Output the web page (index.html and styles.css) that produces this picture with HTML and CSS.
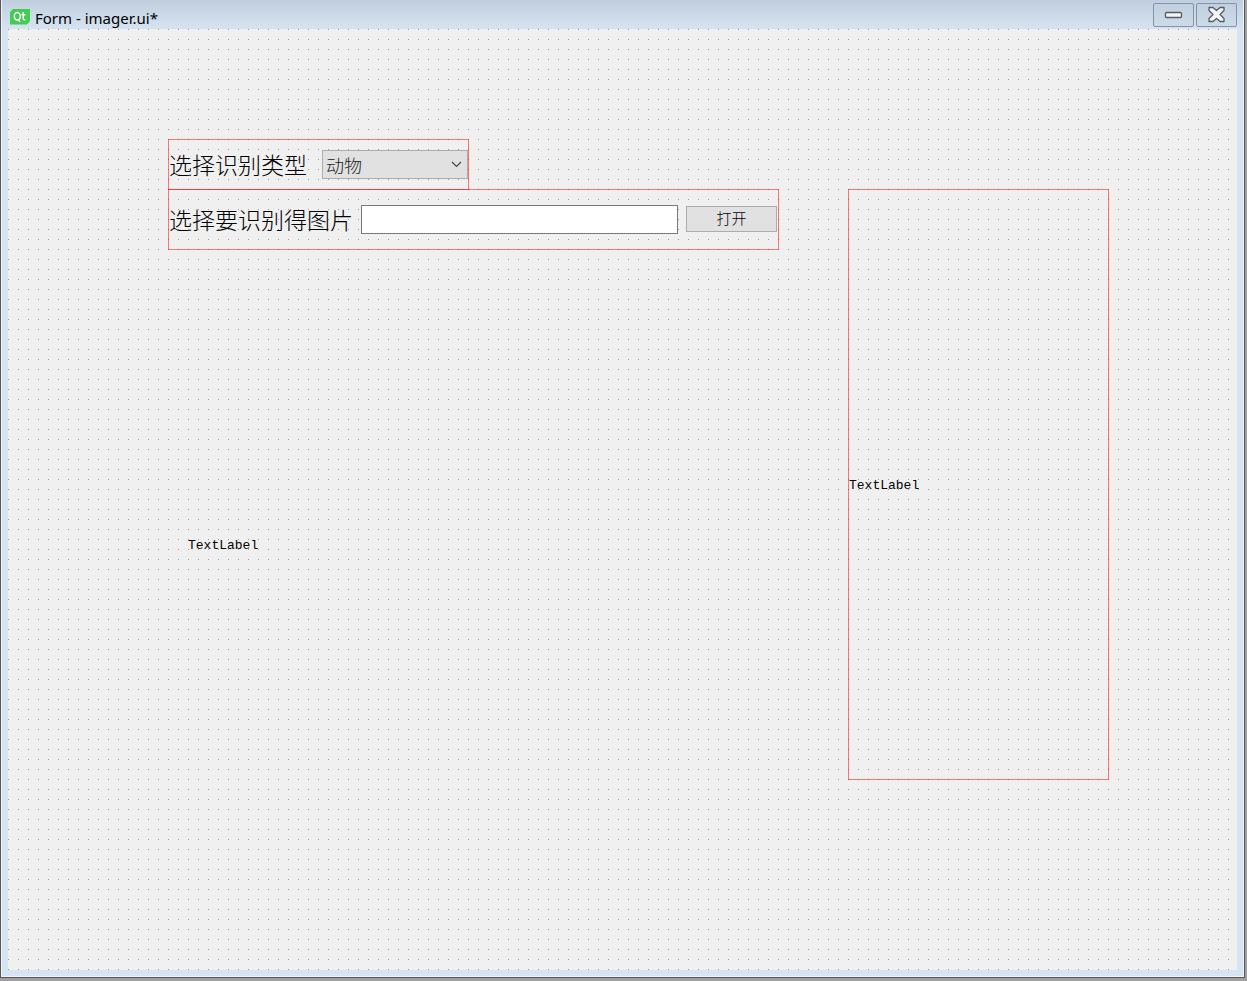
FILE: index.html
```html
<!DOCTYPE html>
<html lang="zh-CN">
<head>
<meta charset="utf-8">
<title>Form - imager.ui*</title>
<link rel="stylesheet" href="styles.css">
</head>
<body>
<div class="window">
  <header class="titlebar">
    <svg class="logo" width="20" height="16" viewBox="0 0 20 16" aria-hidden="true">
      <path d="M3 0H20V12L17 15.5H0V3Z" fill="#41cd52"/>
      <g fill="none" stroke="#fff" stroke-width="1.5">
        <ellipse cx="7.3" cy="7.3" rx="3" ry="3.7"/>
        <path d="M8 10.5l2 2.2M13.2 3v6.4q0 1.700 2.200 1.300M11.500 5.800h3.900"/>
      </g>
    </svg>
    <h1 class="title">Form - imager.ui*</h1>
    <button class="winbtn" type="button" aria-label="Minimize">
      <svg width="19" height="8" viewBox="0 0 19 8"><rect x="1.500" y="1.500" width="16" height="5" rx="1" fill="#f4f4f4" stroke="#535b69" stroke-width="1.300"/></svg>
    </button>
    <button class="winbtn" type="button" aria-label="Close">
      <svg width="19" height="17" viewBox="0 0 19 17"><path d="M2 1.500H6L9.500 4.500L13 1.500H17V4.500L13 8.500L17 12.500V15.500H13L9.500 12.500L6 15.500H2V12.500L6 8.500L2 4.500Z" fill="#f4f4f4" stroke="#535b69" stroke-width="1.300" stroke-linejoin="round"/></svg>
    </button>
  </header>
  <main class="canvas">
    <div class="left">
      <div class="layout type-row">
        <label class="caption" for="kind">选择识别类型</label>
        <div class="combo">
          <select id="kind"><option>动物</option></select>
          <svg class="chevron" width="11" height="7" viewBox="0 0 11 7" aria-hidden="true"><path d="M1 1L5.500 5.500L10 1" fill="none" stroke="#444" stroke-width="1.200"/></svg>
        </div>
      </div>
      <div class="layout file-row">
        <label class="caption" for="path">选择要识别得图片</label>
        <input class="path" id="path" type="text">
        <button class="open" type="button">打开</button>
      </div>
      <p class="textlabel preview">TextLabel</p>
    </div>
    <div class="layout result">
      <p class="textlabel">TextLabel</p>
    </div>
  </main>
</div>
</body>
</html>
```
FILE: styles.css
```css
* { box-sizing: border-box; }
body {
  margin: 0;
  min-height: 100vh;
  display: flex;
  padding: 0 2px 3px 0;
  background: #a0a0a0;
  font-family: "Liberation Mono", "Noto Sans CJK SC", monospace;
  color: #000;
}
.window {
  flex: 1;
  display: flex;
  flex-direction: column;
  padding: 0 7px 7px;
  border: solid #55565a;
  border-width: 0 1px 1px;
  background: linear-gradient(#c0cedd, #d6e4f2 29px);
  box-shadow: inset 1px -1px #eef5fb, inset -1px 0 #eef5fb;
}
.titlebar {
  display: flex;
  align-items: center;
  gap: 2px;
  height: 29px;
  padding: 0 0 0 2px;
}
.logo { margin-top: 5px; }
.title {
  flex: 1;
  margin: 0;
  padding: 7px 0 0 3px;
  font: 15px/22px "Noto Sans", sans-serif;
}
.winbtn {
  display: flex;
  align-items: center;
  justify-content: center;
  width: 41px;
  height: 24px;
  padding: 0;
  border: 1px solid #8193ad;
  border-radius: 2px;
  background: linear-gradient(#c2cfde, #cddae8);
}
.canvas {
  flex: 1;
  display: flex;
  align-items: flex-start;
  gap: 69px;
  padding: 110px 128px 0 160px;
  background:
    linear-gradient(transparent 1px, #f0f0f0 1px) 0 0 / 10px 10px,
    linear-gradient(90deg, #999 1px, #f0f0f0 1px) 0 0 / 10px 10px;
}
.left { flex: 1; }
.layout {
  display: flex;
  align-items: center;
  border: 1px solid rgba(255, 0, 0, 0.5);
}
.caption {
  padding-bottom: 2px;
  font: 300 23px/32px "Noto Sans CJK SC", sans-serif;
  white-space: nowrap;
}
.type-row {
  width: 301px;
  height: 51px;
  gap: 15px;
}
.combo {
  flex: 1;
  display: grid;
  align-items: center;
}
.combo > * { grid-area: 1 / 1; }
.combo select {
  appearance: none;
  width: 100%;
  height: 29px;
  padding: 0 3px;
  border: 1px solid #adadad;
  border-radius: 0;
  background: #e1e1e1;
  color: #222;
  font: 300 18px/24px "Noto Sans CJK SC", sans-serif;
}
.chevron {
  justify-self: end;
  margin-right: 6px;
  pointer-events: none;
}
.file-row {
  height: 61px;
  margin-top: -1px;
  padding-right: 1px;
  gap: 8px;
}
.path {
  flex: 1;
  min-width: 0;
  height: 29px;
  border: 1px solid #7a7a7a;
  background: #fff;
}
.open {
  width: 91px;
  height: 26px;
  margin-bottom: 2px;
  padding: 0 0 2px;
  border: 1px solid #adadad;
  background: #e1e1e1;
  color: #000;
  font: 300 15px/20px "Noto Sans CJK SC", sans-serif;
}
.textlabel {
  margin: 0;
  font-size: 13px;
  line-height: 16px;
}
.preview { padding: 288px 0 0 20px; }
.result {
  flex: 0 1 261px;
  height: 591px;
  margin-top: 50px;
  padding-top: 2px;
}
```
